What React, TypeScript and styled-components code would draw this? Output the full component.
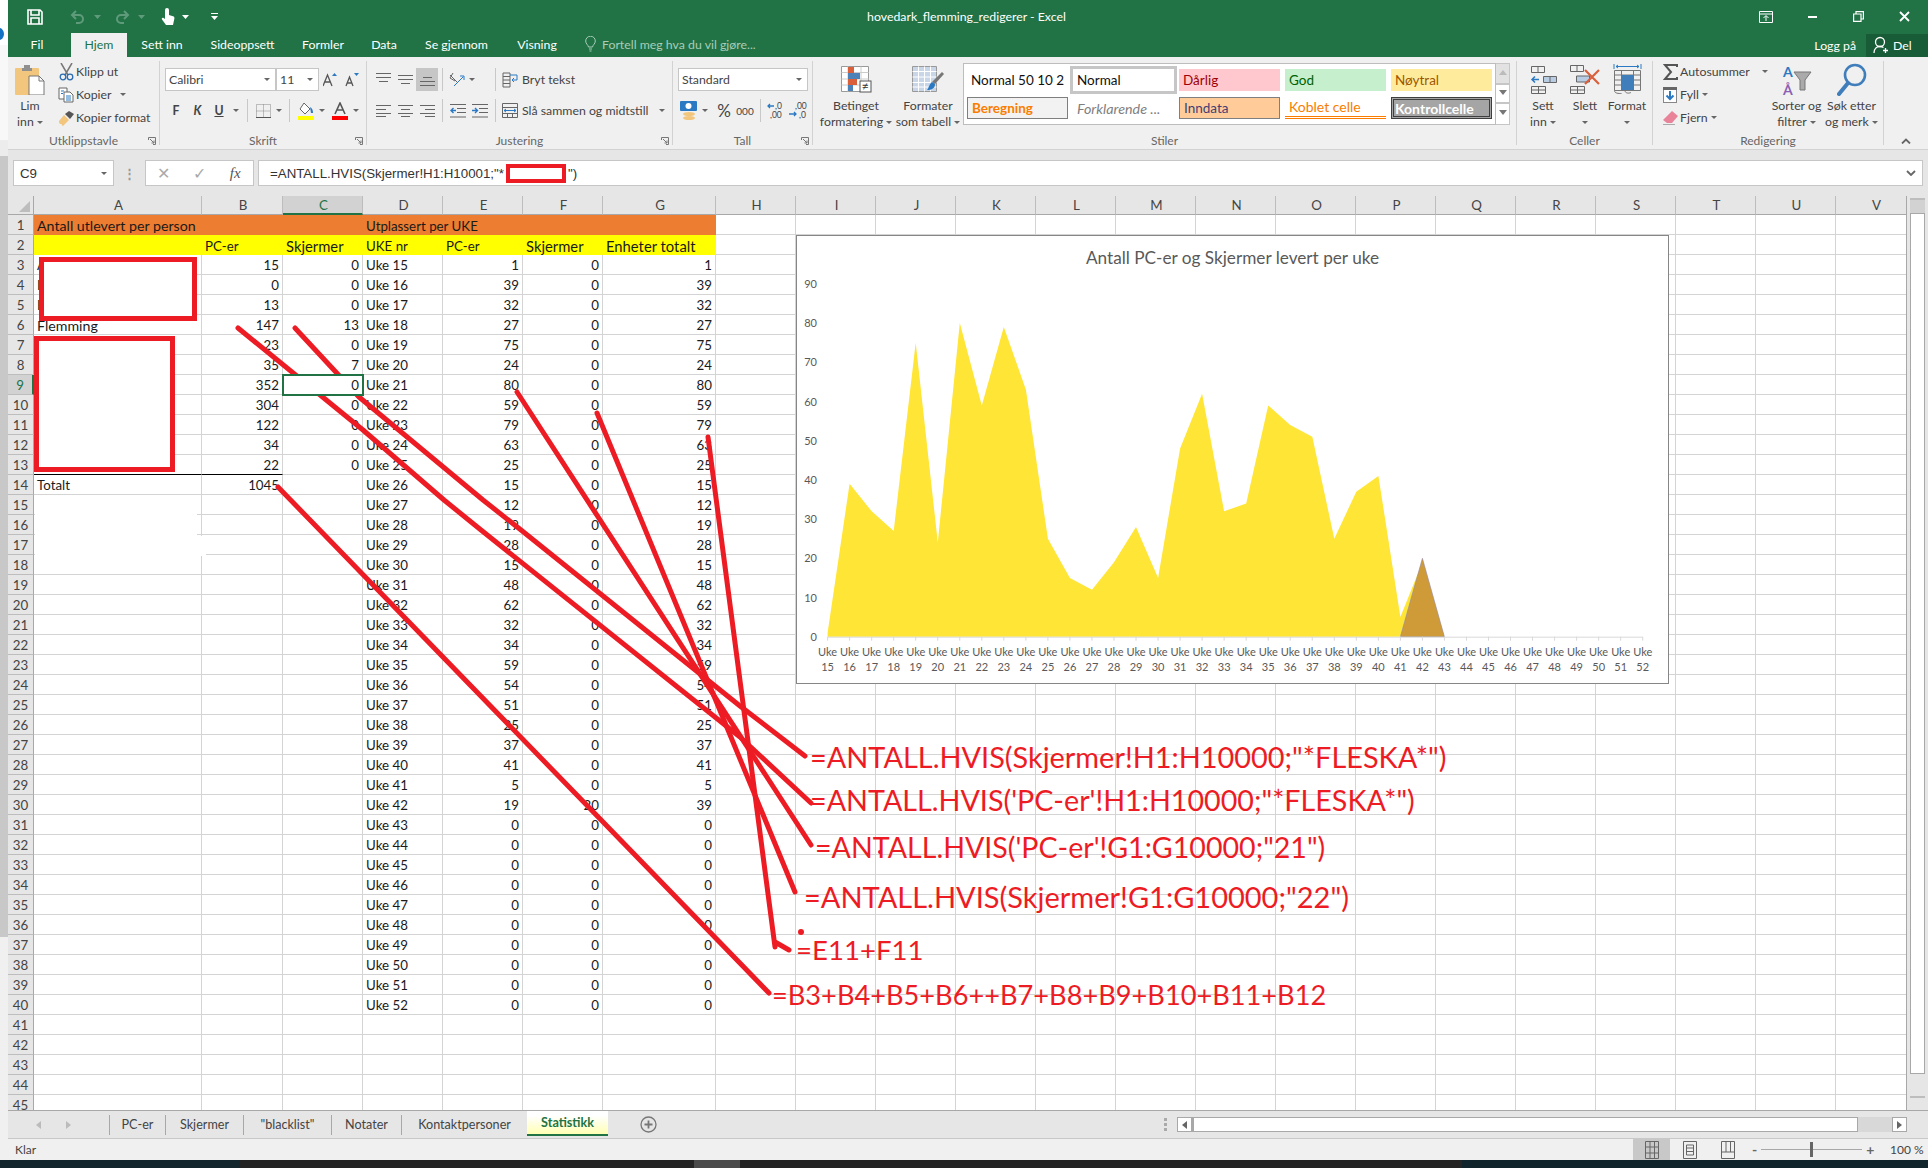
import React from "react";
import styled, { createGlobalStyle } from "styled-components";

const GlobalStyle = createGlobalStyle`
  html, body { margin: 0; padding: 0; background: #fff; }
  body { font-family: Lato, "Open Sans", sans-serif; }
`;

const GREEN = "#217346";
const RED = "#ed1c24";
const GRID = "#d4d4d4";

const Page = styled.div`
  position: relative;
  width: 1928px;
  height: 1168px;
  overflow: hidden;
  display: flex;
  flex-direction: column;
  color: #444;
`;
const Workspace = styled.div`
  display: flex;
  height: 1160px;
`;
const LeftStrip = styled.div`
  width: 8px;
  display: flex;
  flex-direction: column;
  flex: none;
  overflow: hidden;
`;
const StripPart = styled.div<{ $h: number; $bg: string }>`
  height: ${(p) => p.$h}px;
  background: ${(p) => p.$bg};
  flex: none;
`;
const BlueDot = styled.div`
  width: 10px;
  height: 12px;
  margin: 28px 0 0 -6px;
  border-radius: 50%;
  background: #1272c4;
`;
const Main = styled.div`
  width: 1920px;
  display: flex;
  flex-direction: column;
`;

/* title bar */
const TitleBar = styled.div`
  height: 33px;
  background: ${GREEN};
  display: grid;
  grid-template-columns: 1fr auto 1fr;
  align-items: center;
  color: #fff;
`;
const Qat = styled.div`
  display: flex;
  align-items: center;
  padding-left: 17px;
`;
const Slot = styled.div<{ $w: number; $ml?: number }>`
  width: ${(p) => p.$w}px;
  margin-left: ${(p) => p.$ml ?? 0}px;
  flex: none;
  display: flex;
  align-items: center;
  justify-content: center;
`;
const AppTitle = styled.div`
  font-size: 12.3px;
  padding-right: 3px;
`;
const WindowButtons = styled.div`
  display: flex;
  justify-content: flex-end;
  align-items: center;
  padding-right: 1px;
`;

/* ribbon tabs */
const TabRow = styled.div`
  height: 24px;
  background: ${GREEN};
  display: flex;
  align-items: stretch;
  color: #fff;
  font-size: 12.3px;
`;
const RibbonTab = styled.div<{ $w: number; $ml?: number; $active?: boolean }>`
  width: ${(p) => p.$w}px;
  margin-left: ${(p) => p.$ml ?? 0}px;
  box-sizing: border-box;
  padding-bottom: 2px;
  display: flex;
  align-items: center;
  justify-content: center;
  background: ${(p) => (p.$active ? "#f0f0f0" : "transparent")};
  color: ${(p) => (p.$active ? GREEN : "#fff")};
`;
const TellMe = styled.div`
  display: flex;
  align-items: center;
  gap: 6px;
  margin-left: 14px;
  padding-bottom: 2px;
  color: #a9cdb8;
`;
const Account = styled.div`
  margin-left: auto;
  display: flex;
  align-items: center;
`;
const LoggPa = styled.div`
  margin-right: 10px;
`;
const DelButton = styled.div`
  width: 62px;
  height: 23px;
  background: #185c37;
  display: flex;
  align-items: center;
  gap: 4px;
  padding-left: 7px;
  box-sizing: border-box;
`;

/* ribbon */
const Ribbon = styled.div`
  height: 93px;
  box-sizing: border-box;
  background: #f0f0f0;
  border-bottom: 1px solid #d2d2d2;
  padding-top: 4px;
  display: flex;
  font-size: 12.3px;
`;
const Group = styled.div<{ $w: number }>`
  position: relative;
  width: ${(p) => p.$w}px;
  height: 84px;
  flex: none;
  box-sizing: border-box;
  border-right: 1px solid #d2d2d2;
  display: flex;
  flex-direction: column;
`;
const GroupBody = styled.div<{ $pl?: number }>`
  height: 72px;
  display: flex;
  padding-left: ${(p) => p.$pl ?? 0}px;
`;
const GroupBodyStack = styled.div<{ $pl?: number }>`
  height: 72px;
  display: flex;
  flex-direction: column;
  padding-left: ${(p) => p.$pl ?? 0}px;
`;
const GroupLabel = styled.div`
  height: 12px;
  line-height: 16px;
  text-align: center;
  color: #666;
  font-size: 12px;
`;
const Launcher = styled.div`
  position: absolute;
  right: 3px;
  bottom: 0;
  line-height: 0;
`;
const BigButton = styled.div<{ $w: number }>`
  width: ${(p) => p.$w}px;
  flex: none;
  display: flex;
  flex-direction: column;
  align-items: center;
  line-height: 16px;
  white-space: nowrap;
`;
const BigIcon = styled.div`
  height: 37px;
  display: flex;
  align-items: center;
  justify-content: center;
`;
const SmallColumn = styled.div<{ $w: number; $ml?: number }>`
  width: ${(p) => p.$w}px;
  margin-left: ${(p) => p.$ml ?? 0}px;
  margin-top: -1px;
  flex: none;
  display: flex;
  flex-direction: column;
`;
const SmallRow = styled.div`
  height: 23px;
  display: flex;
  align-items: center;
  white-space: nowrap;
`;
const ToolRow = styled.div<{ $mt: number }>`
  height: 23px;
  margin-top: ${(p) => p.$mt}px;
  display: flex;
  align-items: center;
  white-space: nowrap;
`;
const Tool = styled.div<{ $w: number; $ml?: number; $active?: boolean; $bold?: boolean }>`
  width: ${(p) => p.$w}px;
  height: 23px;
  margin-left: ${(p) => p.$ml ?? 0}px;
  flex: none;
  display: flex;
  align-items: center;
  justify-content: center;
  background: ${(p) => (p.$active ? "#c6c6c6" : "transparent")};
  font-weight: ${(p) => (p.$bold ? 700 : 400)};
`;
const ToolText = styled.div<{ $w: number }>`
  width: ${(p) => p.$w}px;
  margin-left: 2px;
  flex: none;
`;
const Divider = styled.div<{ $ml: number }>`
  width: 1px;
  height: 23px;
  margin-left: ${(p) => p.$ml}px;
  background: #c8c8c8;
  flex: none;
`;
const Caret = styled.span<{ $ml?: number }>`
  display: inline-block;
  width: 0;
  height: 0;
  margin-left: ${(p) => p.$ml ?? 0}px;
  border-left: 3px solid transparent;
  border-right: 3px solid transparent;
  border-top: 3.5px solid #666;
  vertical-align: middle;
`;
const SelectBox = styled.div<{ $w: number }>`
  width: ${(p) => p.$w}px;
  height: 23px;
  box-sizing: border-box;
  flex: none;
  background: #fff;
  border: 1px solid #c6c6c6;
  display: flex;
  align-items: center;
  justify-content: space-between;
  padding: 0 5px 0 3px;
`;
const PercentMark = styled.span`
  font-size: 17px;
`;
const ThousandMark = styled.span`
  font-size: 10px;
`;
const Gallery = styled.div`
  width: 547px;
  height: 62px;
  margin: 2px 0 0 -1px;
  box-sizing: border-box;
  display: flex;
`;
const GalleryGrid = styled.div`
  width: 533px;
  box-sizing: border-box;
  background: #fff;
  border: 1px solid #bdbdbd;
  padding: 5px 0 0 3px;
  display: grid;
  grid-template-columns: repeat(5, 101px);
  grid-auto-rows: 22px;
  column-gap: 5px;
  row-gap: 6px;
`;
const StyleCell = styled.div<{
  $bg?: string;
  $color?: string;
  $border?: string;
  $bold?: boolean;
  $italic?: boolean;
}>`
  box-sizing: border-box;
  display: flex;
  align-items: center;
  padding-left: 4px;
  font-size: 13.5px;
  white-space: nowrap;
  overflow: hidden;
  background: ${(p) => p.$bg ?? "transparent"};
  color: ${(p) => p.$color ?? "#111"};
  border: ${(p) => p.$border ?? "none"};
  font-weight: ${(p) => (p.$bold ? 700 : 400)};
  font-style: ${(p) => (p.$italic ? "italic" : "normal")};
`;
const NormalCell = styled(StyleCell)`
  outline: 3px solid #c6c6c6;
`;
const LinkedCell = styled(StyleCell)`
  border-bottom: 3px double #fa7d00;
  font-size: 14px;
`;
const CheckCell = styled(StyleCell)`
  border: 3px double #3f3f3f;
  padding-left: 1px;
  font-size: 14px;
`;
const ExplainCell = styled(StyleCell)`
  font-size: 14.3px;
`;
const GalleryScroll = styled.div`
  width: 14px;
  display: flex;
  flex-direction: column;
`;
const GalleryArrow = styled.div<{ $h: number; $off?: boolean }>`
  height: ${(p) => p.$h}px;
  box-sizing: border-box;
  background: ${(p) => (p.$off ? "#e2e2e2" : "#fff")};
  border: 1px solid #c6c6c6;
  border-left: none;
  display: flex;
  align-items: center;
  justify-content: center;
`;
const Chevron = styled.div`
  flex: 1;
  display: flex;
  justify-content: center;
  align-items: flex-end;
  padding-bottom: 5px;
`;

/* formula bar */
const FormulaBar = styled.div`
  height: 46px;
  box-sizing: border-box;
  background: #e6e6e6;
  display: flex;
  padding: 10px 5px 10px 5px;
  font-size: 13.3px;
  font-family: "Liberation Sans", Arial, sans-serif;
  color: #333;
`;
const NameBox = styled.div`
  width: 101px;
  height: 26px;
  box-sizing: border-box;
  background: #fff;
  border: 1px solid #c6c6c6;
  display: flex;
  align-items: center;
  justify-content: space-between;
  padding: 0 6px;
`;
const Grip = styled.div`
  width: 31px;
  display: flex;
  justify-content: center;
  align-items: center;
  color: #999;
  font-weight: 700;
`;
const FxBox = styled.div`
  width: 109px;
  height: 26px;
  box-sizing: border-box;
  background: #fff;
  border: 1px solid #c6c6c6;
  display: flex;
  align-items: center;
`;
const FxItem = styled.div<{ $w: number }>`
  width: ${(p) => p.$w}px;
  display: flex;
  justify-content: center;
  color: #aaa;
  font-size: 16px;
`;
const FxMark = styled.div`
  width: 36px;
  display: flex;
  justify-content: center;
  color: #555;
  font-family: "Liberation Serif", serif;
  font-style: italic;
  font-size: 15px;
`;
const FormulaInput = styled.div`
  flex: 1;
  height: 26px;
  margin-left: 4px;
  box-sizing: border-box;
  background: #fff;
  border: 1px solid #c6c6c6;
  display: flex;
  align-items: center;
  padding-left: 11px;
  padding-right: 6px;
  white-space: pre;
`;
const FormulaRedact = styled.span`
  display: inline-block;
  width: 60px;
  height: 19px;
  box-sizing: border-box;
  background: #fff;
  border: 4.5px solid ${RED};
  margin: 0 2px 0 2px;
`;
const InputEnd = styled.div`
  margin-left: auto;
`;

/* sheet */
const SheetArea = styled.div`
  height: 914px;
  background: #e6e6e6;
  display: flex;
  overflow: hidden;
`;
const GridView = styled.div`
  width: 1899px;
  height: 914px;
  box-sizing: border-box;
  border-right: 1px solid #a8a8a8;
  background: #fff;
  overflow: hidden;
  font-size: 13.3px;
`;
const GridRow = styled.div<{ $h?: number }>`
  display: flex;
  height: ${(p) => p.$h ?? 20}px;
`;
const Corner = styled.div`
  width: 26px;
  height: 19px;
  flex: none;
  box-sizing: border-box;
  background: #e6e6e6;
  border-bottom: 1px solid #a8a8a8;
  border-right: 1px solid #a8a8a8;
  display: flex;
  align-items: flex-end;
  justify-content: flex-end;
  padding: 0 3px 2px 0;
`;
const ColHead = styled.div<{ $w: number; $active?: boolean }>`
  width: ${(p) => p.$w}px;
  height: 19px;
  flex: none;
  box-sizing: border-box;
  padding-left: 2px;
  display: flex;
  align-items: center;
  justify-content: center;
  background: ${(p) => (p.$active ? "#d2d2d2" : "#e6e6e6")};
  color: ${(p) => (p.$active ? GREEN : "#444")};
  border-right: 1px solid #bdbdbd;
  border-bottom: ${(p) => (p.$active ? `2px solid ${GREEN}` : "1px solid #a8a8a8")};
`;
const RowHead = styled.div<{ $active?: boolean }>`
  width: 26px;
  flex: none;
  box-sizing: border-box;
  padding-top: 1px;
  display: flex;
  align-items: center;
  justify-content: center;
  background: ${(p) => (p.$active ? "#d2d2d2" : "#e6e6e6")};
  color: ${(p) => (p.$active ? GREEN : "#444")};
  border-bottom: 1px solid #bdbdbd;
  border-right: ${(p) => (p.$active ? `2px solid ${GREEN}` : "1px solid #a8a8a8")};
`;
const Cell = styled.div<{
  $w: number;
  $right?: boolean;
  $fill?: string;
  $strong?: boolean;
  $selected?: boolean;
  $size?: number;
}>`
  position: relative;
  width: ${(p) => p.$w}px;
  flex: none;
  box-sizing: border-box;
  display: flex;
  align-items: center;
  justify-content: ${(p) => (p.$right ? "flex-end" : "flex-start")};
  padding: 1px 3px 0;
  color: #1a1a1a;
  white-space: nowrap;
  font-size: ${(p) => p.$size ?? 13.3}px;
  background: ${(p) => p.$fill ?? "#fff"};
  border-right: ${(p) => (p.$fill ? "none" : `1px solid ${GRID}`)};
  border-bottom: ${(p) => (p.$strong ? "1px solid #000" : p.$fill ? "none" : `1px solid ${GRID}`)};
  ${(p) => (p.$selected ? `outline: 2px solid ${GREEN}; outline-offset: -1px; z-index: 1;` : "")}
`;
const VScroll = styled.div`
  width: 15px;
  margin: 2px 0 0 3px;
  display: flex;
  flex-direction: column;
`;
const VScrollUp = styled.div`
  height: 15px;
  background: #d2d2d2;
  border-top: 2px solid #bdbdbd;
  box-sizing: border-box;
`;
const VScrollThumb = styled.div`
  height: 861px;
  box-sizing: border-box;
  background: #fff;
  border: 1px solid #a8a8a8;
`;
const VScrollMark = styled.div`
  height: 2px;
  margin-top: 22px;
  background: #bdbdbd;
`;

/* overlays */
const ChartBox = styled.div`
  position: absolute;
  left: 796px;
  top: 235px;
  width: 873px;
  height: 449px;
  box-sizing: border-box;
  background: #fff;
  border: 1px solid #868686;
`;
const ChartTitle = styled.div`
  height: 43px;
  line-height: 43px;
  text-align: center;
  color: #595959;
  font-size: 17.2px;
`;
const ChartSvg = styled.svg`
  position: absolute;
  left: -1px;
  top: -1px;
`;
const Redact = styled.div<{ $x: number; $y: number; $w: number; $h: number; $b: number }>`
  position: absolute;
  left: ${(p) => p.$x}px;
  top: ${(p) => p.$y}px;
  width: ${(p) => p.$w}px;
  height: ${(p) => p.$h}px;
  box-sizing: border-box;
  background: #fff;
  border: ${(p) => p.$b}px solid ${RED};
`;
const WhiteOut = styled.div<{ $x: number; $y: number; $w: number; $h: number }>`
  position: absolute;
  left: ${(p) => p.$x}px;
  top: ${(p) => p.$y}px;
  width: ${(p) => p.$w}px;
  height: ${(p) => p.$h}px;
  background: #fff;
`;
const InkLayer = styled.svg`
  position: absolute;
  left: 0;
  top: 0;
  pointer-events: none;
`;
const RedNote = styled.div<{ $x: number; $cy: number; $size: number }>`
  position: absolute;
  left: ${(p) => p.$x}px;
  top: ${(p) => p.$cy - 20}px;
  height: 40px;
  line-height: 40px;
  white-space: pre;
  color: ${RED};
  font-size: ${(p) => p.$size}px;
`;

/* sheet tabs */
const TabBar = styled.div`
  height: 28px;
  box-sizing: border-box;
  background: #e6e6e6;
  border-top: 1px solid #a8a8a8;
  display: flex;
  align-items: center;
  font-size: 12.6px;
`;
const TabNav = styled.div`
  width: 101px;
  flex: none;
  display: flex;
  justify-content: flex-start;
  gap: 22px;
  padding-left: 27px;
  box-sizing: border-box;
`;
const SheetTab = styled.div<{ $w: number }>`
  width: ${(p) => p.$w}px;
  height: 20px;
  flex: none;
  box-sizing: border-box;
  border-left: 1px solid #a8a8a8;
  display: flex;
  align-items: center;
  justify-content: center;
`;
const ActiveTab = styled.div`
  width: 81px;
  height: 25px;
  flex: none;
  align-self: flex-start;
  box-sizing: border-box;
  background: linear-gradient(#fff 20%, #ffffb4);
  border-bottom: 2px solid ${GREEN};
  color: ${GREEN};
  font-weight: 700;
  display: flex;
  align-items: center;
  justify-content: center;
`;
const AddTab = styled.div`
  margin-left: 32px;
  line-height: 0;
`;
const ScrollGrip = styled.div`
  margin-left: auto;
  margin-right: 8px;
  width: 8px;
  display: flex;
  flex-direction: column;
  align-items: center;
  gap: 2px;
`;
const GripDot = styled.span`
  width: 3px;
  height: 3px;
  background: #aaa;
`;
const HScroll = styled.div`
  width: 730px;
  height: 15px;
  display: flex;
  margin-right: 21px;
`;
const HArrow = styled.div`
  width: 15px;
  box-sizing: border-box;
  background: #fff;
  border: 1px solid #a8a8a8;
  display: flex;
  align-items: center;
  justify-content: center;
  flex: none;
`;
const HThumb = styled.div`
  width: 666px;
  box-sizing: border-box;
  background: #fff;
  border: 1px solid #a8a8a8;
  border-left-width: 2px;
  flex: none;
`;
const HTrack = styled.div`
  flex: 1;
  background: #d8d8d8;
`;

/* status bar */
const StatusBar = styled.div`
  height: 22px;
  box-sizing: border-box;
  background: #f0f0f0;
  border-top: 1px solid #c8c8c8;
  display: flex;
  align-items: center;
  font-size: 12px;
  color: #444;
`;
const Ready = styled.div`
  margin-left: 7px;
`;
const ViewButton = styled.div<{ $active?: boolean; $first?: boolean }>`
  width: 37px;
  height: 21px;
  margin-left: ${(p) => (p.$first ? "auto" : "1px")};
  background: ${(p) => (p.$active ? "#c8c8c8" : "transparent")};
  display: flex;
  align-items: center;
  justify-content: center;
`;
const Zoomer = styled.div`
  display: flex;
  align-items: center;
  box-sizing: border-box;
  padding-left: 6px;
  width: 144px;
  flex: none;
  font-weight: 700;
  font-size: 14px;
  color: #666;
`;
const SliderTrack = styled.div`
  position: relative;
  width: 101px;
  height: 1px;
  background: #a8a8a8;
  margin: 0 4px;
`;
const SliderKnob = styled.div`
  position: absolute;
  left: 49px;
  top: -7px;
  width: 3px;
  height: 15px;
  background: #666;
`;
const ZoomValue = styled.div`
  width: 38px;
  flex: none;
  font-size: 12px;
`;

const Taskbar = styled.div`
  height: 8px;
  display: flex;
  overflow: hidden;
`;
const TaskPart = styled.div<{ $w: number; $bg: string }>`
  width: ${(p) => p.$w}px;
  background: ${(p) => p.$bg};
  flex: none;
`;
const TaskClock = styled.div`
  flex: 1;
  background: #10242b;
  color: #fff;
  font-size: 12px;
  line-height: 14px;
  padding: 6px 0 0 411px;
  box-sizing: border-box;
`;

/* icons */
const Ic = styled.svg`
  display: block;
  flex: none;
`;
const FlipX = styled.div`
  transform: scaleX(-1);
`;

const SaveIcon = () => (
  <Ic width="16" height="16" viewBox="0 0 16 16" fill="none" stroke="#fff" strokeWidth="1.6">
    <path d="M1 1h12l2 2v12H1z" />
    <path d="M4 1v5h8V1M4 15v-6h8v6" />
  </Ic>
);
const UndoIcon = () => (
  <Ic width="16" height="14" viewBox="0 0 16 14" fill="none" stroke="#5f9b7b" strokeWidth="2">
    <path d="M6 1L2 5l4 4M2 5h7a4 4 0 0 1 0 8H6" />
  </Ic>
);
const TouchIcon = () => (
  <Ic width="14" height="18" viewBox="0 0 14 18" fill="#fff">
    <path d="M4 2a2 2 0 0 1 4 0v5l4 1.2c1.2.4 1.6 1.2 1.4 2.4L12 17H5L1 11.5c-.7-1 .5-2.2 1.6-1.4L4 11z" />
  </Ic>
);
const SmallCaret = ({ color = "#fff" }: { color?: string }) => (
  <Ic width="7" height="4" viewBox="0 0 7 4" fill={color}>
    <path d="M0 0h7L3.5 4z" />
  </Ic>
);
const CustomizeIcon = () => (
  <Ic width="7" height="8" viewBox="0 0 7 8" fill="#fff">
    <path d="M0 0h7v1H0zM0 3h7L3.5 7z" />
  </Ic>
);
const RibbonOptionsIcon = () => (
  <Ic width="14" height="12" viewBox="0 0 14 12" fill="none" stroke="#fff">
    <path d="M.5.5h13v11H.5zM.5 3h13" />
    <path d="M7 10V5M4.5 7L7 4.5 9.5 7" />
  </Ic>
);
const MinimizeIcon = () => (
  <Ic width="9" height="2" viewBox="0 0 9 2" fill="#fff">
    <path d="M0 0h9v2H0z" />
  </Ic>
);
const RestoreIcon = () => (
  <Ic width="11" height="11" viewBox="0 0 11 11" fill="none" stroke="#fff" strokeWidth="1.2">
    <path d="M.6 3h7.4v7.4H.6zM3 3V.6h7.4V8H8" />
  </Ic>
);
const CloseIcon = () => (
  <Ic width="11" height="11" viewBox="0 0 11 11" fill="none" stroke="#fff" strokeWidth="1.8">
    <path d="M1 1l9 9M10 1l-9 9" />
  </Ic>
);
const BulbIcon = () => (
  <Ic width="11" height="16" viewBox="0 0 11 16" fill="none" stroke="#a9cdb8">
    <path d="M3.5 11C3 8.5.7 8 .7 5a4.8 4.8 0 0 1 9.6 0c0 3-2.3 3.5-2.8 6zM4 13h3M4.5 15h2" />
  </Ic>
);
const PersonIcon = () => (
  <Ic width="16" height="18" viewBox="0 0 16 18" fill="none" stroke="#fff" strokeWidth="1.3">
    <circle cx="7" cy="6" r="4.5" />
    <path d="M1 17c0-4 2.5-6.5 6-6.5 1.5 0 2.5.4 3.5 1M12.5 12v5M10 14.5h5" />
  </Ic>
);
const PasteIcon = () => (
  <Ic width="30" height="31" viewBox="0 0 30 31">
    <rect x="0" y="4" width="24" height="27" rx="1" fill="#f2c67d" />
    <path d="M7 4h2V1h6v3h2v3H7z" fill="#8f8f8f" />
    <path d="M14 12h10l5 5v14H14z" fill="#fff" stroke="#767676" />
    <path d="M24 12v5h5" fill="none" stroke="#767676" />
  </Ic>
);
const ScissorsIcon = () => (
  <Ic width="15" height="18" viewBox="0 0 15 18" fill="none">
    <path d="M2 0l7 12M13 0L6 12" stroke="#777" strokeWidth="1.5" />
    <circle cx="4" cy="14" r="2.8" stroke="#2b6cb0" strokeWidth="1.3" />
    <circle cx="11" cy="14" r="2.8" stroke="#2b6cb0" strokeWidth="1.3" />
  </Ic>
);
const CopyIcon = () => (
  <Ic width="16" height="16" viewBox="0 0 16 16" fill="#fff" stroke="#666">
    <path d="M1 1h8v11H1z" />
    <path d="M6 5h6l3 3v7H6z" />
    <path d="M3 4h3M3 6.5h2M8 9h5M8 11h5M8 13h5" stroke="#2b79c2" />
  </Ic>
);
const BrushIcon = () => (
  <Ic width="17" height="16" viewBox="0 0 17 16">
    <path d="M1 11l5-6 5 5-6 6c-1 0-1-2-2-2s-2 0-2-3z" fill="#f2c67d" />
    <path d="M7 4l4-3 5 3-4 5z" fill="#555" />
  </Ic>
);
const GrowIcon = ({ down }: { down?: boolean }) => (
  <Ic width="14" height="15" viewBox="0 0 14 15">
    <path d={down ? "M9 1h5l-2.5 3z" : "M9 4h5l-2.5-3z"} fill="#2b79c2" />
    <path d={down ? "M1 14L4.5 5 8 14M2.5 11h4" : "M0 14L4.5 3 9 14M2 10h5"} fill="none" stroke="#555" strokeWidth="1.3" />
  </Ic>
);
const BorderIcon = () => (
  <Ic width="15" height="14" viewBox="0 0 15 14" fill="none" stroke="#888" strokeDasharray="1 1">
    <path d="M.5.5h14v13H.5zM7.5.5v13M.5 7h14" />
    <path d="M0 13.5h15" strokeDasharray="none" stroke="#555" />
  </Ic>
);
const FillIcon = () => (
  <Ic width="16" height="18" viewBox="0 0 16 18">
    <path d="M6 1l6 6-5 5-5-5z" fill="#fff" stroke="#666" />
    <path d="M12 5c2 1 3 3 3 6h-2z" fill="#2b79c2" />
    <rect x="0" y="14" width="16" height="4" fill="#ffff00" />
  </Ic>
);
const FontColorIcon = () => (
  <Ic width="16" height="18" viewBox="0 0 16 18">
    <path d="M3 12L8 1l5 11M5 8h6" fill="none" stroke="#555" strokeWidth="1.6" />
    <rect x="0" y="14" width="16" height="4" fill="#f00" />
  </Ic>
);
const AlignLines = ({ lines }: { lines: string[] }) => (
  <Ic width="15" height="15" viewBox="0 0 15 15" fill="none" stroke="#666">
    {lines.map((d) => (
      <path key={d} d={d} />
    ))}
  </Ic>
);
const OrientIcon = () => (
  <Ic width="18" height="16" viewBox="0 0 18 16" fill="none" stroke="#666">
    <path d="M2 3l7 7M5 1l-3 5 5 3" />
    <path d="M6 14l9-9M12 4h4v4" stroke="#2b79c2" />
  </Ic>
);
const IndentIcon = ({ out }: { out?: boolean }) => (
  <Ic width="16" height="14" viewBox="0 0 16 14" fill="none">
    <path d="M0 .5h16M7 4.5h9M7 8.5h9M0 13h16" stroke="#666" />
    <path d={out ? "M6 6.5H1M3.5 4L1 6.5 3.5 9" : "M0 6.5h5M3 4l2.5 2.5L3 9"} stroke="#2b79c2" strokeWidth="1.4" />
  </Ic>
);
const WrapIcon = () => (
  <Ic width="16" height="16" viewBox="0 0 16 16" fill="none">
    <path d="M1 1h7v14H1zM1 4.5h7M1 8h7M1 11.5h7" stroke="#666" />
    <path d="M8 3h7v5H10M12 6l-2 2 2 2" stroke="#2b79c2" />
  </Ic>
);
const MergeIcon = () => (
  <Ic width="16" height="15" viewBox="0 0 16 15" fill="none" stroke="#666">
    <path d="M.5.5h15v14H.5zM.5 4.5h15M.5 10.5h15M5.5 10.5v4M10.5 10.5v4" />
    <path d="M2 7.5h12M4 6l-2 1.5L4 9M12 6l2 1.5L12 9" stroke="#2b79c2" />
  </Ic>
);
const CurrencyIcon = () => (
  <Ic width="18" height="20" viewBox="0 0 18 20">
    <rect x="0" y="0" width="17" height="10" rx="1" fill="#2b79c2" />
    <circle cx="8.5" cy="5" r="3" fill="#fff" />
    <ellipse cx="9" cy="13" rx="6" ry="2" fill="#f2c67d" />
    <ellipse cx="9" cy="17" rx="6" ry="2" fill="#f2c67d" />
  </Ic>
);
const DecimalIcon = ({ more }: { more?: boolean }) => (
  <Ic width="19" height="17" viewBox="0 0 19 17" fontFamily="Lato" fontSize="8.5" fill="#444">
    <text x={more ? 8 : 6} y="7">{more ? ",0" : ",00"}</text>
    <text x={more ? 3 : 10} y="16">{more ? ",00" : ",0"}</text>
    <path d={more ? "M7 4H1M3 2L1 4l2 2" : "M0 12h7M5 10l2 2-2 2"} fill="none" stroke="#2b79c2" strokeWidth="1.3" />
  </Ic>
);
const CondFormatIcon = () => (
  <Ic width="31" height="27" viewBox="0 0 31 27">
    <path d="M.5.5h27v25H.5z" fill="#fff" stroke="#999" />
    <path d="M7 .5v25M20 .5v25M.5 6.5h27M.5 13h27M.5 19h27" stroke="#ccc" fill="none" />
    <rect x="7" y="1" width="6" height="6" fill="#d9603b" />
    <rect x="7" y="7" width="12" height="6" fill="#4d82b8" />
    <rect x="7" y="13" width="9" height="6" fill="#d9603b" />
    <rect x="7" y="19" width="5" height="6" fill="#4d82b8" />
    <rect x="19" y="15" width="11" height="11" fill="#fff" stroke="#555" />
    <text x="21" y="24" fontSize="11" fill="#333" fontFamily="Liberation Sans">≠</text>
  </Ic>
);
const TableFormatIcon = () => (
  <Ic width="32" height="27" viewBox="0 0 32 27">
    <path d="M.5.5h24v25H.5z" fill="#c9d6e8" stroke="#999" />
    <path d="M.5 5.5h24M.5 11h24M.5 16.5h24M.5 21h24M6.5.5v25M12.5.5v25M18.5.5v25" stroke="#fff" fill="none" />
    <path d="M30 6l2 2-9 10-3-2z" fill="#777" />
    <path d="M20 16l3 2c0 4-3 6-8 6 2-2 2-6 5-8z" fill="#2b79c2" />
  </Ic>
);
const InsertIcon = () => (
  <Ic width="27" height="28" viewBox="0 0 27 28" fill="none" stroke="#666">
    <path d="M1.5.5h13v6h-13zM8 .5v6M1.5 20.5h14v7h-14zM8.5 20.5v7M1.5 24h14" />
    <path d="M13.5 10.5h13v6h-13zM20 10.5v6" fill="#b8cce4" />
    <path d="M9 13.5H2M5 10.5l-3 3 3 3" stroke="#2b79c2" strokeWidth="1.5" />
  </Ic>
);
const DeleteIcon = () => (
  <Ic width="30" height="29" viewBox="0 0 30 29" fill="none" stroke="#666">
    <path d="M.5.5h13v6H.5zM7 .5v6M.5 21.5h14v7H.5zM7.5 21.5v7M.5 25h14" />
    <path d="M6.5 11h13v6h-13z" fill="#b8cce4" />
    <path d="M15 5l14 14M29 5L15 19" stroke="#d9603b" strokeWidth="2.2" />
  </Ic>
);
const FormatCellsIcon = () => (
  <Ic width="29" height="31" viewBox="0 0 29 31" fill="none" stroke="#777">
    <path d="M1 0v5M28 0v5M3 2.5h23M3 2.5l2-1.5M3 2.5L5 4M26 2.5L24 1M26 2.5L24 4" stroke="#2b79c2" />
    <path d="M1.5 6.5h26v20h-26zM1.5 11h26M1.5 16h26M1.5 21h26M8.5 6.5v20M20.5 6.5v20" />
    <rect x="8" y="11" width="13" height="15" fill="#3f7dbb" stroke="none" />
    <path d="M1.5 26.5c0 3 4 3 7 3M12 26.5c0 3 4 3 6 2" />
  </Ic>
);
const SigmaIcon = () => (
  <Ic width="15" height="16" viewBox="0 0 15 16" fill="none" stroke="#555" strokeWidth="2">
    <path d="M14 3V1H2l6 7-6 7h12v-2" />
  </Ic>
);
const FillDownIcon = () => (
  <Ic width="14" height="16" viewBox="0 0 14 16">
    <rect x=".5" y=".5" width="13" height="15" fill="#fff" stroke="#888" />
    <rect x="0" y="0" width="14" height="3" fill="#666" />
    <path d="M7 4v8M3.5 8.5L7 12l3.5-3.5" fill="none" stroke="#2b79c2" strokeWidth="2" />
  </Ic>
);
const EraserIcon = () => (
  <Ic width="15" height="14" viewBox="0 0 15 14">
    <path d="M9 0l6 5-6 7H4L0 9z" fill="#e9839a" />
    <path d="M0 13.5h12" stroke="#aaa" />
  </Ic>
);
const SortIcon = () => (
  <Ic width="30" height="34" viewBox="0 0 30 34" fontFamily="Lato" fontWeight="700" fontSize="14">
    <text x="1" y="14" fill="#2b79c2">A</text>
    <text x="1" y="32" fill="#8a5fb5">Å</text>
    <path d="M12 9h17l-6 8v10h-5V17z" fill="#aaa" stroke="#777" />
  </Ic>
);
const SearchIcon = () => (
  <Ic width="30" height="33" viewBox="0 0 30 33" fill="none">
    <circle cx="18" cy="12" r="10" stroke="#3f7dbb" strokeWidth="2.6" />
    <path d="M11 20L2 31" stroke="#3f7dbb" strokeWidth="4" strokeLinecap="round" />
  </Ic>
);
const LauncherIcon = () => (
  <Ic width="8" height="8" viewBox="0 0 8 8" fill="none" stroke="#777">
    <path d="M.5 3V.5H7.5V7.5H5M2 2l4 4M3.5 6H6V3.5" />
  </Ic>
);
const CollapseIcon = () => (
  <Ic width="10" height="6" viewBox="0 0 10 6" fill="none" stroke="#666" strokeWidth="1.8">
    <path d="M1 5.5l4-4 4 4" />
  </Ic>
);
const ArrowTri = ({ dir, color = "#777" }: { dir: "up" | "down" | "left" | "right"; color?: string }) => {
  const d = { up: "M0 5h8L4 0z", down: "M0 0h8L4 5z", left: "M6 0v8L1 4z", right: "M1 0v8l5-4z" }[dir];
  return (
    <Ic width="8" height="8" viewBox="0 0 8 8" fill={color}>
      <path d={d} />
    </Ic>
  );
};
const PlusCircle = () => (
  <Ic width="17" height="17" viewBox="0 0 17 17" fill="none" stroke="#777" strokeWidth="1.3">
    <circle cx="8.5" cy="8.5" r="7.5" />
    <path d="M8.5 4.5v8M4.5 8.5h8" strokeWidth="1.8" />
  </Ic>
);
const NormalViewIcon = () => (
  <Ic width="14" height="18" viewBox="0 0 14 18" fill="none" stroke="#666">
    <path d="M.5.5h13v17H.5zM.5 6h13M.5 12h13M5 .5v17M9.5.5v17" />
  </Ic>
);
const PageViewIcon = () => (
  <Ic width="14" height="18" viewBox="0 0 14 18" fill="none" stroke="#666">
    <path d="M.5.5h13v17H.5z" />
    <path d="M3.5 4h7v10h-7zM3.5 7h7M3.5 10.5h7" />
  </Ic>
);
const BreakViewIcon = () => (
  <Ic width="14" height="18" viewBox="0 0 14 18" fill="none" stroke="#666">
    <path d="M.5.5h13v17H.5zM.5 11h13M5 .5V11M9.5.5V11" />
  </Ic>
);

/* data */
const columns: { id: string; w: number }[] = [
  { id: "A", w: 168 },
  { id: "B", w: 81 },
  { id: "C", w: 80 },
  { id: "D", w: 80 },
  { id: "E", w: 80 },
  { id: "F", w: 80 },
  { id: "G", w: 113 },
  ..."HIJKLMNOPQRSTUV".split("").map((id) => ({ id, w: 80 })),
];

const pcs = [1, 39, 32, 27, 75, 24, 80, 59, 79, 63, 25, 15, 12, 19, 28, 15, 48, 62, 32, 34, 59, 54, 51, 25, 37, 41, 5, 19, 0, 0, 0, 0, 0, 0, 0, 0, 0, 0];
const screens = pcs.map((_, i) => (i === 27 ? 20 : 0));
const people: Record<number, [string, number, number]> = {
  3: ["A", 15, 0],
  4: ["B", 0, 0],
  5: ["B", 13, 0],
  6: ["Flemming", 147, 13],
  7: ["", 23, 0],
  8: ["", 35, 7],
  9: ["", 352, 0],
  10: ["", 304, 0],
  11: ["", 122, 0],
  12: ["", 34, 0],
  13: ["", 22, 0],
};

function cellText(row: number, col: number): string {
  if (row === 2) return ["", "PC-er", "Skjermer", "UKE nr", "PC-er", "Skjermer", "Enheter totalt"][col] ?? "";
  if (col <= 2) {
    if (row === 14) return ["Totalt", "1045", ""][col];
    const p = people[row];
    return p ? String(p[col]) : "";
  }
  if (col > 6) return "";
  const w = row - 3;
  if (w < 0 || w >= pcs.length) return "";
  if (col === 3) return `Uke ${w + 15}`;
  if (col === 4) return String(pcs[w]);
  if (col === 5) return String(screens[w]);
  return String(pcs[w] + screens[w]);
}

const wideLabel = (text: string) => {
  if (text === "Skjermer" || text === "Enheter totalt") return 14.8;
  if (text === "Flemming") return 14.2;
  return undefined;
};

const SheetRows = () => (
  <>
    <GridRow $h={19}>
      <Corner>
        <Ic width="11" height="11" viewBox="0 0 11 11" fill="#bdbdbd">
          <path d="M11 0v11H0z" />
        </Ic>
      </Corner>
      {columns.map((c) => (
        <ColHead key={c.id} $w={c.w} $active={c.id === "C"}>
          {c.id}
        </ColHead>
      ))}
    </GridRow>
    <GridRow>
      <RowHead>1</RowHead>
      <Cell $w={329} $fill="#ed7d31" $size={14.2}>Antall utlevert per person</Cell>
      <Cell $w={353} $fill="#ed7d31">Utplassert per UKE</Cell>
      {columns.slice(7).map((c) => (
        <Cell key={c.id} $w={c.w} />
      ))}
    </GridRow>
    {Array.from({ length: 44 }, (_, i) => i + 2).map((row) => (
      <GridRow key={row}>
        <RowHead $active={row === 9}>{row}</RowHead>
        {columns.map((c, col) => {
          const text = cellText(row, col);
          const numeric = text !== "" && /^\d+$/.test(text);
          return (
            <Cell
              key={c.id}
              $w={c.w}
              $right={numeric}
              $size={wideLabel(text)}
              $fill={row === 2 && col <= 6 ? "#ffff00" : undefined}
              $strong={row === 13 && col <= 1}
              $selected={row === 9 && col === 2}
            >
              {text}
            </Cell>
          );
        })}
      </GridRow>
    ))}
  </>
);

const X0 = 31.6;
const DX = 22.03;
const Y0 = 401.7;
const UNIT = 3.92;
const ptX = (i: number) => X0 + i * DX;
const ptY = (v: number) => Y0 - v * UNIT;
const area = (vals: number[], from: number, to: number) =>
  `M${ptX(from)} ${Y0} ` +
  vals.slice(from, to + 1).map((v, i) => `L${ptX(from + i).toFixed(1)} ${ptY(v).toFixed(1)}`).join(" ") +
  ` L${ptX(to)} ${Y0}Z`;

const Chart = () => (
  <ChartBox>
    <ChartTitle>Antall PC-er og Skjermer levert per uke</ChartTitle>
    <ChartSvg width="873" height="449" viewBox="0 0 873 449" fontFamily="Lato, sans-serif" fontSize="11" fill="#595959">
      {[0, 10, 20, 30, 40, 50, 60, 70, 80, 90].map((v) => (
        <text key={v} x="21" y={ptY(v) + 4} textAnchor="end">
          {v}
        </text>
      ))}
      <path d={area(pcs, 0, 37)} fill="#ffe535" />
      <path d={area(screens, 26, 28)} fill="#cf9b38" stroke="#8f86a8" strokeWidth="0.6" />
      <path d={`M${ptX(0)} ${Y0 + 0.5}H${ptX(37)}`} stroke="#d9d9d9" />
      {pcs.map((_, i) => (
        <g key={i}>
          <path d={`M${ptX(i)} ${Y0}v4`} stroke="#d9d9d9" />
          <text x={ptX(i)} y={Y0 + 19} textAnchor="middle">Uke</text>
          <text x={ptX(i)} y={Y0 + 34} textAnchor="middle">{i + 15}</text>
        </g>
      ))}
    </ChartSvg>
  </ChartBox>
);

const inkLines = [
  "M295 328L359 397L483 500L521 530L740 706L805 756",
  "M238 328L363 430L444 500L481 530L740 737L811 803",
  "M517 392L811 845",
  "M597 413L795 892",
  "M708 437L775 947M775 942L789 950",
  "M278 487L769 993",
];

const Ink = () => (
  <InkLayer width="1928" height="1168" viewBox="0 0 1928 1168">
    {inkLines.map((d) => (
      <path key={d} d={d} fill="none" stroke={RED} strokeWidth="5" strokeLinecap="round" strokeLinejoin="round" />
    ))}
    <circle cx="801" cy="932" r="3" fill={RED} />
    <circle cx="880" cy="852" r="2" fill={RED} />
  </InkLayer>
);

export default function App() {
  return (
    <Page>
      <GlobalStyle />
      <Workspace>
        <LeftStrip>
          <StripPart $h={45} $bg="#fff">
            <BlueDot />
          </StripPart>
          <StripPart $h={95} $bg="#f8f8f8" />
          <StripPart $h={16} $bg="#ececec" />
          <StripPart $h={781} $bg="#c8c8c8" />
          <StripPart $h={223} $bg="#f0f0f0" />
        </LeftStrip>
        <Main>
          <TitleBar>
            <Qat>
              <Slot $w={20}><SaveIcon /></Slot>
              <Slot $w={24} $ml={21}><UndoIcon /></Slot>
              <Slot $w={14}><SmallCaret color="#5f9b7b" /></Slot>
              <Slot $w={24} $ml={6}><FlipX><UndoIcon /></FlipX></Slot>
              <Slot $w={14}><SmallCaret color="#5f9b7b" /></Slot>
              <Slot $w={24} $ml={8}><TouchIcon /></Slot>
              <Slot $w={10}><SmallCaret /></Slot>
              <Slot $w={16} $ml={16}><CustomizeIcon /></Slot>
            </Qat>
            <AppTitle>hovedark_flemming_redigerer - Excel</AppTitle>
            <WindowButtons>
              <Slot $w={46}><RibbonOptionsIcon /></Slot>
              <Slot $w={46}><MinimizeIcon /></Slot>
              <Slot $w={46}><RestoreIcon /></Slot>
              <Slot $w={46}><CloseIcon /></Slot>
            </WindowButtons>
          </TitleBar>
          <TabRow>
            <RibbonTab $w={42} $ml={8}>Fil</RibbonTab>
            <RibbonTab $w={56} $ml={13} $active>Hjem</RibbonTab>
            <RibbonTab $w={70}>Sett inn</RibbonTab>
            <RibbonTab $w={91}>Sideoppsett</RibbonTab>
            <RibbonTab $w={70}>Formler</RibbonTab>
            <RibbonTab $w={52}>Data</RibbonTab>
            <RibbonTab $w={93}>Se gjennom</RibbonTab>
            <RibbonTab $w={68}>Visning</RibbonTab>
            <TellMe>
              <BulbIcon />
              Fortell meg hva du vil gjøre...
            </TellMe>
            <Account>
              <LoggPa>Logg på</LoggPa>
              <DelButton>
                <PersonIcon />
                Del
              </DelButton>
            </Account>
          </TabRow>
          <Ribbon>
            <Group $w={152}>
              <GroupBody>
                <BigButton $w={44}>
                  <BigIcon><PasteIcon /></BigIcon>
                  <div>Lim</div>
                  <div>inn <Caret /></div>
                </BigButton>
                <SmallColumn $w={100} $ml={4}>
                  <SmallRow><Slot $w={20}><ScissorsIcon /></Slot>Klipp ut</SmallRow>
                  <SmallRow><Slot $w={20}><CopyIcon /></Slot>Kopier<Caret $ml={9} /></SmallRow>
                  <SmallRow><Slot $w={20}><BrushIcon /></Slot>Kopier format</SmallRow>
                </SmallColumn>
              </GroupBody>
              <GroupLabel>Utklippstavle</GroupLabel>
              <Launcher><LauncherIcon /></Launcher>
            </Group>
            <Group $w={207}>
              <GroupBodyStack $pl={5}>
                <ToolRow $mt={7}>
                  <SelectBox $w={111}>Calibri<Caret /></SelectBox>
                  <SelectBox $w={43}>11<Caret /></SelectBox>
                  <Tool $w={22}><GrowIcon /></Tool>
                  <Tool $w={22}><GrowIcon down /></Tool>
                </ToolRow>
                <ToolRow $mt={8}>
                  <Tool $w={22} $bold>F</Tool>
                  <Tool $w={21} $bold><i>K</i></Tool>
                  <Tool $w={22} $bold><u>U</u></Tool>
                  <Tool $w={12}><Caret /></Tool>
                  <Divider $ml={5} />
                  <Tool $w={22} $ml={4}><BorderIcon /></Tool>
                  <Tool $w={10}><Caret /></Tool>
                  <Divider $ml={5} />
                  <Tool $w={20} $ml={6}><FillIcon /></Tool>
                  <Tool $w={12}><Caret /></Tool>
                  <Tool $w={20} $ml={2}><FontColorIcon /></Tool>
                  <Tool $w={12}><Caret /></Tool>
                </ToolRow>
              </GroupBodyStack>
              <GroupLabel>Skrift</GroupLabel>
              <Launcher><LauncherIcon /></Launcher>
            </Group>
            <Group $w={306}>
              <GroupBodyStack $pl={5}>
                <ToolRow $mt={7}>
                  <Tool $w={22}><AlignLines lines={["M0 1.5h15", "M0 5.5h15", "M3 9.5h9"]} /></Tool>
                  <Tool $w={22}><AlignLines lines={["M0 3.5h15", "M0 7.5h15", "M3 11.5h9"]} /></Tool>
                  <Tool $w={22} $active><AlignLines lines={["M3 5.5h9", "M0 9.5h15", "M0 13.5h15"]} /></Tool>
                  <Divider $ml={4} />
                  <Tool $w={20} $ml={4}><OrientIcon /></Tool>
                  <Tool $w={10}><Caret /></Tool>
                  <Divider $ml={18} />
                  <Tool $w={20} $ml={4}><WrapIcon /></Tool>
                  <ToolText $w={62}>Bryt tekst</ToolText>
                </ToolRow>
                <ToolRow $mt={8}>
                  <Tool $w={22}><AlignLines lines={["M0 2.5h15", "M0 6.5h10", "M0 10.5h15", "M0 13.5h10"]} /></Tool>
                  <Tool $w={22}><AlignLines lines={["M0 2.5h15", "M3 6.5h9", "M0 10.5h15", "M3 13.5h9"]} /></Tool>
                  <Tool $w={22}><AlignLines lines={["M0 2.5h15", "M5 6.5h10", "M0 10.5h15", "M5 13.5h10"]} /></Tool>
                  <Divider $ml={4} />
                  <Tool $w={22} $ml={4}><IndentIcon out /></Tool>
                  <Tool $w={22}><IndentIcon /></Tool>
                  <Divider $ml={4} />
                  <Tool $w={20} $ml={4}><MergeIcon /></Tool>
                  <ToolText $w={128}>Slå sammen og midtstill</ToolText>
                  <Tool $w={12} $ml={6}><Caret /></Tool>
                </ToolRow>
              </GroupBodyStack>
              <GroupLabel>Justering</GroupLabel>
              <Launcher><LauncherIcon /></Launcher>
            </Group>
            <Group $w={140}>
              <GroupBodyStack $pl={5}>
                <ToolRow $mt={7}>
                  <SelectBox $w={130}>Standard<Caret /></SelectBox>
                </ToolRow>
                <ToolRow $mt={8}>
                  <Tool $w={22}><CurrencyIcon /></Tool>
                  <Tool $w={10}><Caret /></Tool>
                  <Tool $w={22} $ml={3}><PercentMark>%</PercentMark></Tool>
                  <Tool $w={20}><ThousandMark>000</ThousandMark></Tool>
                  <Divider $ml={5} />
                  <Tool $w={22} $ml={4}><DecimalIcon more /></Tool>
                  <Tool $w={22}><DecimalIcon /></Tool>
                </ToolRow>
              </GroupBodyStack>
              <GroupLabel>Tall</GroupLabel>
              <Launcher><LauncherIcon /></Launcher>
            </Group>
            <Group $w={704}>
              <GroupBody $pl={7}>
                <BigButton $w={72}>
                  <BigIcon><CondFormatIcon /></BigIcon>
                  <div>Betinget</div>
                  <div>formatering <Caret /></div>
                </BigButton>
                <BigButton $w={72}>
                  <BigIcon><TableFormatIcon /></BigIcon>
                  <div>Formater</div>
                  <div>som tabell <Caret /></div>
                </BigButton>
                <Gallery>
                  <GalleryGrid>
                    <StyleCell>Normal 50 10 2</StyleCell>
                    <NormalCell>Normal</NormalCell>
                    <StyleCell $bg="#ffc7ce" $color="#9c0006">Dårlig</StyleCell>
                    <StyleCell $bg="#c6efce" $color="#006100">God</StyleCell>
                    <StyleCell $bg="#ffeb9c" $color="#9c5700">Nøytral</StyleCell>
                    <StyleCell $bg="#f2f2f2" $color="#fa7d00" $bold $border="1px solid #7f7f7f">Beregning</StyleCell>
                    <ExplainCell $color="#7f7f7f" $italic>Forklarende ...</ExplainCell>
                    <StyleCell $bg="#ffcc99" $color="#3f3f76" $border="1px solid #7f7f7f">Inndata</StyleCell>
                    <LinkedCell $color="#fa7d00">Koblet celle</LinkedCell>
                    <CheckCell $bg="#a5a5a5" $color="#fff" $bold>Kontrollcelle</CheckCell>
                  </GalleryGrid>
                  <GalleryScroll>
                    <GalleryArrow $h={21} $off><ArrowTri dir="up" color="#bbb" /></GalleryArrow>
                    <GalleryArrow $h={19}><ArrowTri dir="down" /></GalleryArrow>
                    <GalleryArrow $h={22}><ArrowTri dir="down" /></GalleryArrow>
                  </GalleryScroll>
                </Gallery>
              </GroupBody>
              <GroupLabel>Stiler</GroupLabel>
            </Group>
            <Group $w={136}>
              <GroupBody $pl={5}>
                <BigButton $w={42}>
                  <BigIcon><InsertIcon /></BigIcon>
                  <div>Sett</div>
                  <div>inn <Caret /></div>
                </BigButton>
                <BigButton $w={42}>
                  <BigIcon><DeleteIcon /></BigIcon>
                  <div>Slett</div>
                  <div><Caret /></div>
                </BigButton>
                <BigButton $w={42}>
                  <BigIcon><FormatCellsIcon /></BigIcon>
                  <div>Format</div>
                  <div><Caret /></div>
                </BigButton>
              </GroupBody>
              <GroupLabel>Celler</GroupLabel>
            </Group>
            <Group $w={231}>
              <GroupBody $pl={7}>
                <SmallColumn $w={109}>
                  <SmallRow><Slot $w={20}><SigmaIcon /></Slot>Autosummer<Caret $ml={12} /></SmallRow>
                  <SmallRow><Slot $w={20}><FillDownIcon /></Slot>Fyll<Caret $ml={3} /></SmallRow>
                  <SmallRow><Slot $w={20}><EraserIcon /></Slot>Fjern<Caret $ml={3} /></SmallRow>
                </SmallColumn>
                <BigButton $w={55}>
                  <BigIcon><SortIcon /></BigIcon>
                  <div>Sorter og</div>
                  <div>filtrer <Caret /></div>
                </BigButton>
                <BigButton $w={55}>
                  <BigIcon><SearchIcon /></BigIcon>
                  <div>Søk etter</div>
                  <div>og merk <Caret /></div>
                </BigButton>
              </GroupBody>
              <GroupLabel>Redigering</GroupLabel>
            </Group>
            <Chevron><CollapseIcon /></Chevron>
          </Ribbon>
          <FormulaBar>
            <NameBox>C9<Caret /></NameBox>
            <Grip>⋮</Grip>
            <FxBox>
              <FxItem $w={36}>✕</FxItem>
              <FxItem $w={36}>✓</FxItem>
              <FxMark>fx</FxMark>
            </FxBox>
            <FormulaInput>
              {'=ANTALL.HVIS(Skjermer!H1:H10001;"*'}
              <FormulaRedact />
              {'")'}
              <InputEnd><Ic width="10" height="6" viewBox="0 0 10 6" fill="none" stroke="#666" strokeWidth="1.8"><path d="M1 1l4 4 4-4" /></Ic></InputEnd>
            </FormulaInput>
          </FormulaBar>
          <SheetArea>
            <GridView>
              <SheetRows />
            </GridView>
            <VScroll>
              <VScrollUp />
              <VScrollThumb />
              <VScrollMark />
            </VScroll>
          </SheetArea>
          <TabBar>
            <TabNav>
              <ArrowTri dir="left" color="#bbb" />
              <ArrowTri dir="right" color="#bbb" />
            </TabNav>
            <SheetTab $w={56}>PC-er</SheetTab>
            <SheetTab $w={78}>Skjermer</SheetTab>
            <SheetTab $w={88}>"blacklist"</SheetTab>
            <SheetTab $w={70}>Notater</SheetTab>
            <SheetTab $w={126}>Kontaktpersoner</SheetTab>
            <ActiveTab>Statistikk</ActiveTab>
            <AddTab><PlusCircle /></AddTab>
            <ScrollGrip>
              <GripDot />
              <GripDot />
              <GripDot />
            </ScrollGrip>
            <HScroll>
              <HArrow><ArrowTri dir="left" color="#666" /></HArrow>
              <HThumb />
              <HTrack />
              <HArrow><ArrowTri dir="right" color="#666" /></HArrow>
            </HScroll>
          </TabBar>
          <StatusBar>
            <Ready>Klar</Ready>
            <ViewButton $first $active><NormalViewIcon /></ViewButton>
            <ViewButton><PageViewIcon /></ViewButton>
            <ViewButton><BreakViewIcon /></ViewButton>
            <Zoomer>
              -
              <SliderTrack><SliderKnob /></SliderTrack>
              +
            </Zoomer>
            <ZoomValue>100 %</ZoomValue>
          </StatusBar>
        </Main>
      </Workspace>
      <Taskbar>
        <TaskPart $w={240} $bg="#12252c" />
        <TaskPart $w={454} $bg="#232323" />
        <TaskPart $w={46} $bg="#4a4a4a" />
        <TaskPart $w={722} $bg="#232323" />
        <TaskClock>13:32</TaskClock>
      </Taskbar>

      <Chart />
      <WhiteOut $x={35} $y={496} $w={162} $h={60} />
      <WhiteOut $x={197} $y={536} $w={9} $h={20} />
      <Redact $x={39} $y={257} $w={158} $h={64} $b={5} />
      <Redact $x={34} $y={336} $w={141} $h={136} $b={5} />
      <Ink />
      <RedNote $x={810} $cy={757} $size={28.9}>{'=ANTALL.HVIS(Skjermer!H1:H10000;"*FLESKA*")'}</RedNote>
      <RedNote $x={810} $cy={800} $size={28.7}>{"=ANTALL.HVIS('PC-er'!H1:H10000;\"*FLESKA*\")"}</RedNote>
      <RedNote $x={815} $cy={847} $size={28.6}>{"=ANTALL.HVIS('PC-er'!G1:G10000;\"21\")"}</RedNote>
      <RedNote $x={804} $cy={897} $size={29}>{'=ANTALL.HVIS(Skjermer!G1:G10000;"22")'}</RedNote>
      <RedNote $x={796} $cy={950} $size={27.6}>=E11+F11</RedNote>
      <RedNote $x={772} $cy={995} $size={27.2}>=B3+B4+B5+B6++B7+B8+B9+B10+B11+B12</RedNote>
    </Page>
  );
}
